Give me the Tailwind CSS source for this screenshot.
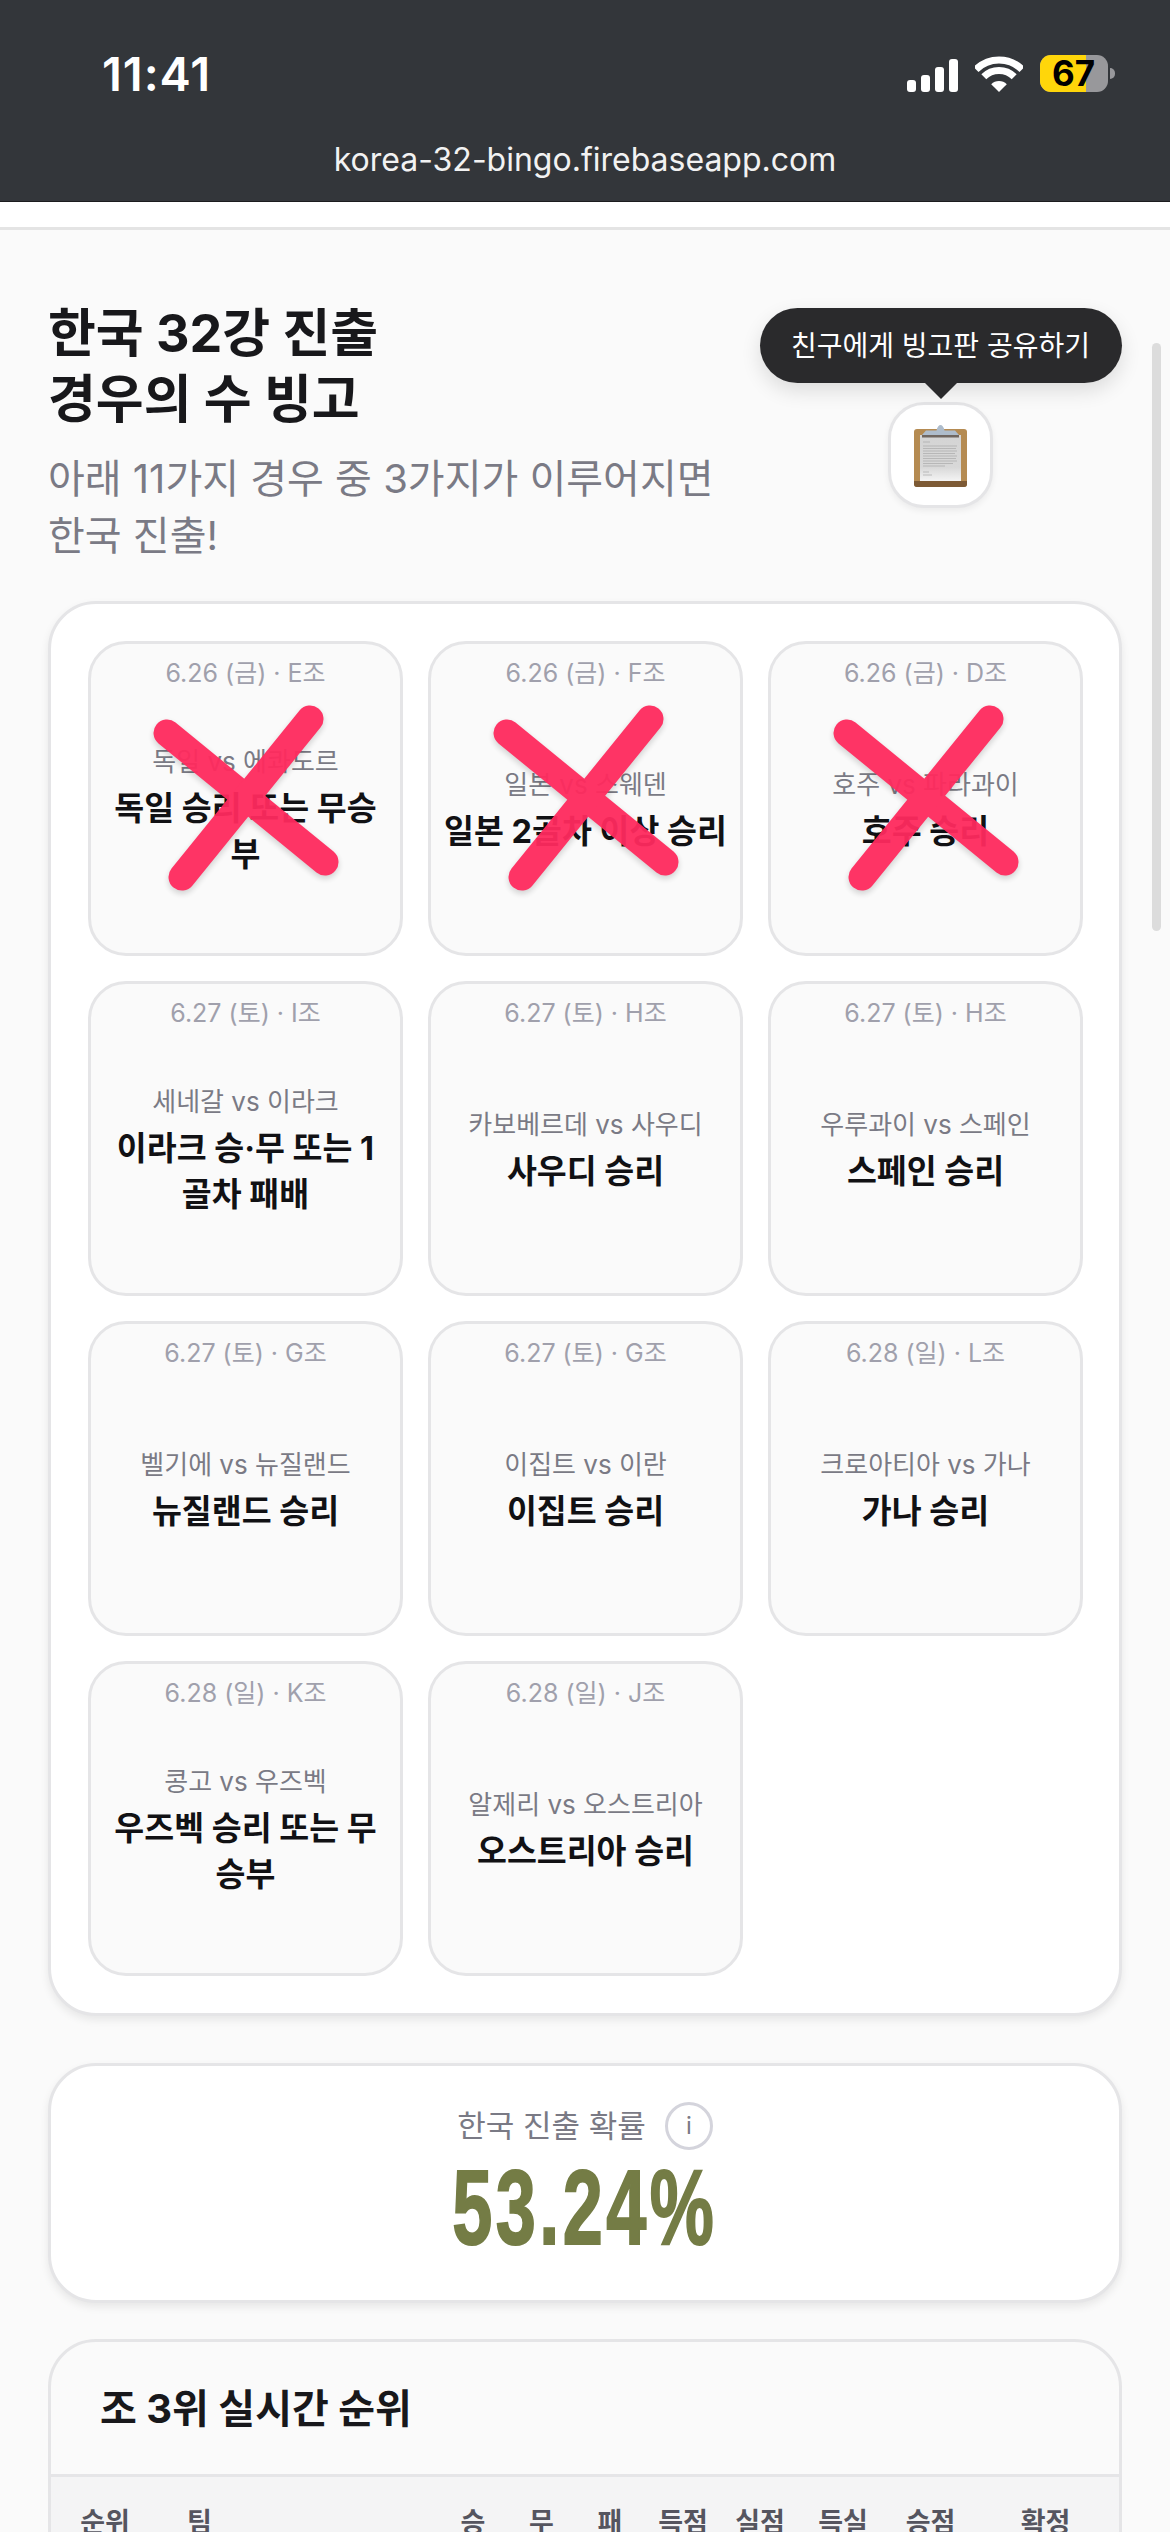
<!DOCTYPE html>
<html lang="ko">
  <head>
    <meta charset="UTF-8" />
    <meta name="viewport" content="width=device-width, initial-scale=1.0" />
    <script src="https://cdn.jsdelivr.net/npm/@tailwindcss/browser@4"></script>
    <title>korea-32-bingo</title>
  </head>
  <body>
    <div class="relative w-[1170px] h-[2532px] overflow-hidden bg-[#fafafa] font-['Inter','Noto_Sans_CJK_KR',sans-serif]">
      <!-- status bar + url -->
      <div class="h-[202px] bg-[#33363a] border-b border-[#1c1c1e] text-white">
        <div class="flex justify-between items-center h-[37px] pl-[102px] pr-[55px] translate-y-[55px]">
          <div class="text-[47px] font-semibold leading-none tracking-[0.02em]">11:41</div>
          <div class="flex items-center">
            <svg width="51" height="33" viewBox="0 0 51 33" class="mt-[3px]" fill="#fff">
              <rect x="0" y="21" width="9" height="12" rx="3" />
              <rect x="14" y="16" width="9" height="17" rx="3" />
              <rect x="28" y="8" width="9" height="25" rx="3" />
              <rect x="42" y="0" width="9" height="33" rx="3" />
            </svg>
            <svg width="48" height="36" viewBox="0 0 48 36" class="ml-[17px]" fill="none" stroke="#fff" stroke-width="7">
              <path d="M1 13.5A32.5 32.5 0 0 1 47 13.5" />
              <path d="M8.8 20.8A21.5 21.5 0 0 1 39.2 20.8" />
              <path d="M24 36L16.2 28.2A11 11 0 0 1 31.8 28.2Z" fill="#fff" stroke="none" />
            </svg>
            <div class="ml-[17px] relative w-[68px] h-[37px] rounded-[11px] overflow-hidden bg-[#98989b]">
              <div class="h-full w-[46px] bg-[#ffd60a]"></div>
              <div class="absolute inset-0 pl-[12px] flex items-center text-black text-[35px] font-bold leading-none">67</div>
            </div>
            <div class="ml-[2px] w-[5px] h-[11px] rounded-r-full bg-[#98989b]"></div>
          </div>
        </div>
        <div class="mt-[103px] text-center text-[32px] leading-[40px] text-[#f2f2f2]">korea-32-bingo.firebaseapp.com</div>
      </div>
      <div class="h-[25px] bg-white"></div>
      <div class="h-[3px] bg-[#e4e4e4]"></div>

      <!-- header -->
      <div class="flex justify-between items-start pl-[48px] pr-[177px] pt-[71px]">
        <div>
          <h1 class="text-[52px] leading-[66px] font-bold text-[#18181b]">한국 32강 진출<br />경우의 수 빙고</h1>
          <p class="mt-[17px] text-[40px] leading-[57px] text-[#7a7a85]">아래 11가지 경우 중 3가지가 이루어지면<br />한국 진출!</p>
        </div>
        <div class="relative mt-[101px]">
          <div class="absolute left-1/2 -translate-x-1/2 -top-[94px] w-[362px] h-[75px] rounded-[38px] bg-[#2a2a2c] text-white text-[28px] flex items-center justify-center whitespace-nowrap shadow-[0_8px_20px_rgba(0,0,0,0.12)]">
            친구에게 빙고판 공유하기
            <div class="absolute left-1/2 -translate-x-1/2 top-[74px] w-0 h-0 border-l-[17px] border-r-[17px] border-t-[17px] border-l-transparent border-r-transparent border-t-[#2a2a2c]"></div>
          </div>
          <div class="w-[105px] h-[106px] rounded-[36px] bg-white border-[3px] border-[#e5e5e7] shadow-[0_3px_6px_rgba(0,0,0,0.06)] flex items-center justify-center">
            <svg width="53" height="63" viewBox="0 0 53 63">
              <defs>
                <linearGradient id="paper" x1="0" y1="0" x2="0" y2="1">
                  <stop offset="0" stop-color="#d4d4d4" />
                  <stop offset="0.7" stop-color="#d8d8d8" />
                  <stop offset="1" stop-color="#f4f4f4" />
                </linearGradient>
              </defs>
              <rect x="0" y="5" width="53" height="58" rx="3" fill="#b58b52" />
              <path d="M0 57H53V60a3 3 0 0 1-3 3H3a3 3 0 0 1-3-3Z" fill="#7d5a35" />
              <rect x="6" y="11" width="41" height="46" fill="url(#paper)" />
              <g stroke="#a9a9a9" stroke-width="0.7">
                <path d="M9 18h7M9 22h34M9 24.5h33M9 27h34M9 29.5h32M9 32h34M9 34.5h33M9 37h34M9 39.5h30M9 42h22M9 48h6M9 51h9" />
              </g>
              <path d="M8 11L12 6.5H22.5C23 3 25 1 26.5 1S30 3 30.5 6.5H41L45 11Z" fill="#aebccb" />
              <rect x="8" y="11" width="37" height="2.5" fill="#6f6660" />
            </svg>
          </div>
        </div>
      </div>

      <!-- bingo board -->
      <div class="mx-[48px] mt-[37px] rounded-[48px] bg-white border-[3px] border-[#e5e5e7] shadow-[0_4px_8px_rgba(0,0,0,0.08)] pt-[37px] pb-[37px] pl-[37px] pr-[36px]">
        <div class="grid grid-cols-3 gap-[25px]">
          <div class="relative h-[315px] flex flex-col rounded-[38px] border-[3px] border-[#e5e5e7] bg-[#fafafa] pt-[11px] pb-[23px] px-[12px] text-center">
            <div class="text-[25px] leading-[36px] text-[#a0a0ac]">6.26 (금) · E조</div>
            <div class="flex-1 flex flex-col justify-center">
              <div class="text-[26px] leading-[36px] text-[#7a7a85]">독일 vs 에콰도르</div>
              <div class="mt-[6px] text-[32.5px] leading-[46px] font-bold text-[#111114]">독일 승리 또는 무승부</div>
            </div>
            <svg class="absolute -left-[3px] -top-[3px] opacity-95 drop-shadow-[0_3px_3px_rgba(0,0,0,0.18)]" width="315" height="315" viewBox="0 0 315 315" fill="none" stroke="#ff2a5e" stroke-width="27" stroke-linecap="round">
              <path d="M79 92L237 221" />
              <path d="M222 78L94 236" />
            </svg>
          </div>
          <div class="relative h-[315px] flex flex-col rounded-[38px] border-[3px] border-[#e5e5e7] bg-[#fafafa] pt-[11px] pb-[23px] px-[12px] text-center">
            <div class="text-[25px] leading-[36px] text-[#a0a0ac]">6.26 (금) · F조</div>
            <div class="flex-1 flex flex-col justify-center">
              <div class="text-[26px] leading-[36px] text-[#7a7a85]">일본 vs 스웨덴</div>
              <div class="mt-[6px] text-[32.5px] leading-[46px] font-bold text-[#111114]">일본 2골차 이상 승리</div>
            </div>
            <svg class="absolute -left-[3px] -top-[3px] opacity-95 drop-shadow-[0_3px_3px_rgba(0,0,0,0.18)]" width="315" height="315" viewBox="0 0 315 315" fill="none" stroke="#ff2a5e" stroke-width="27" stroke-linecap="round">
              <path d="M79 92L237 221" />
              <path d="M222 78L94 236" />
            </svg>
          </div>
          <div class="relative h-[315px] flex flex-col rounded-[38px] border-[3px] border-[#e5e5e7] bg-[#fafafa] pt-[11px] pb-[23px] px-[12px] text-center">
            <div class="text-[25px] leading-[36px] text-[#a0a0ac]">6.26 (금) · D조</div>
            <div class="flex-1 flex flex-col justify-center">
              <div class="text-[26px] leading-[36px] text-[#7a7a85]">호주 vs 파라과이</div>
              <div class="mt-[6px] text-[32.5px] leading-[46px] font-bold text-[#111114]">호주 승리</div>
            </div>
            <svg class="absolute -left-[3px] -top-[3px] opacity-95 drop-shadow-[0_3px_3px_rgba(0,0,0,0.18)]" width="315" height="315" viewBox="0 0 315 315" fill="none" stroke="#ff2a5e" stroke-width="27" stroke-linecap="round">
              <path d="M79 92L237 221" />
              <path d="M222 78L94 236" />
            </svg>
          </div>

          <div class="h-[315px] flex flex-col rounded-[38px] border-[3px] border-[#e5e5e7] bg-[#fafafa] pt-[11px] pb-[23px] px-[12px] text-center">
            <div class="text-[25px] leading-[36px] text-[#a0a0ac]">6.27 (토) · I조</div>
            <div class="flex-1 flex flex-col justify-center">
              <div class="text-[26px] leading-[36px] text-[#7a7a85]">세네갈 vs 이라크</div>
              <div class="mt-[6px] text-[32.5px] leading-[46px] font-bold text-[#111114]">이라크 승·무 또는 1골차 패배</div>
            </div>
          </div>
          <div class="h-[315px] flex flex-col rounded-[38px] border-[3px] border-[#e5e5e7] bg-[#fafafa] pt-[11px] pb-[23px] px-[12px] text-center">
            <div class="text-[25px] leading-[36px] text-[#a0a0ac]">6.27 (토) · H조</div>
            <div class="flex-1 flex flex-col justify-center">
              <div class="text-[26px] leading-[36px] text-[#7a7a85]">카보베르데 vs 사우디</div>
              <div class="mt-[6px] text-[32.5px] leading-[46px] font-bold text-[#111114]">사우디 승리</div>
            </div>
          </div>
          <div class="h-[315px] flex flex-col rounded-[38px] border-[3px] border-[#e5e5e7] bg-[#fafafa] pt-[11px] pb-[23px] px-[12px] text-center">
            <div class="text-[25px] leading-[36px] text-[#a0a0ac]">6.27 (토) · H조</div>
            <div class="flex-1 flex flex-col justify-center">
              <div class="text-[26px] leading-[36px] text-[#7a7a85]">우루과이 vs 스페인</div>
              <div class="mt-[6px] text-[32.5px] leading-[46px] font-bold text-[#111114]">스페인 승리</div>
            </div>
          </div>

          <div class="h-[315px] flex flex-col rounded-[38px] border-[3px] border-[#e5e5e7] bg-[#fafafa] pt-[11px] pb-[23px] px-[12px] text-center">
            <div class="text-[25px] leading-[36px] text-[#a0a0ac]">6.27 (토) · G조</div>
            <div class="flex-1 flex flex-col justify-center">
              <div class="text-[26px] leading-[36px] text-[#7a7a85]">벨기에 vs 뉴질랜드</div>
              <div class="mt-[6px] text-[32.5px] leading-[46px] font-bold text-[#111114]">뉴질랜드 승리</div>
            </div>
          </div>
          <div class="h-[315px] flex flex-col rounded-[38px] border-[3px] border-[#e5e5e7] bg-[#fafafa] pt-[11px] pb-[23px] px-[12px] text-center">
            <div class="text-[25px] leading-[36px] text-[#a0a0ac]">6.27 (토) · G조</div>
            <div class="flex-1 flex flex-col justify-center">
              <div class="text-[26px] leading-[36px] text-[#7a7a85]">이집트 vs 이란</div>
              <div class="mt-[6px] text-[32.5px] leading-[46px] font-bold text-[#111114]">이집트 승리</div>
            </div>
          </div>
          <div class="h-[315px] flex flex-col rounded-[38px] border-[3px] border-[#e5e5e7] bg-[#fafafa] pt-[11px] pb-[23px] px-[12px] text-center">
            <div class="text-[25px] leading-[36px] text-[#a0a0ac]">6.28 (일) · L조</div>
            <div class="flex-1 flex flex-col justify-center">
              <div class="text-[26px] leading-[36px] text-[#7a7a85]">크로아티아 vs 가나</div>
              <div class="mt-[6px] text-[32.5px] leading-[46px] font-bold text-[#111114]">가나 승리</div>
            </div>
          </div>

          <div class="h-[315px] flex flex-col rounded-[38px] border-[3px] border-[#e5e5e7] bg-[#fafafa] pt-[11px] pb-[23px] px-[12px] text-center">
            <div class="text-[25px] leading-[36px] text-[#a0a0ac]">6.28 (일) · K조</div>
            <div class="flex-1 flex flex-col justify-center">
              <div class="text-[26px] leading-[36px] text-[#7a7a85]">콩고 vs 우즈벡</div>
              <div class="mt-[6px] text-[32.5px] leading-[46px] font-bold text-[#111114]">우즈벡 승리 또는 무승부</div>
            </div>
          </div>
          <div class="h-[315px] flex flex-col rounded-[38px] border-[3px] border-[#e5e5e7] bg-[#fafafa] pt-[11px] pb-[23px] px-[12px] text-center">
            <div class="text-[25px] leading-[36px] text-[#a0a0ac]">6.28 (일) · J조</div>
            <div class="flex-1 flex flex-col justify-center">
              <div class="text-[26px] leading-[36px] text-[#7a7a85]">알제리 vs 오스트리아</div>
              <div class="mt-[6px] text-[32.5px] leading-[46px] font-bold text-[#111114]">오스트리아 승리</div>
            </div>
          </div>
        </div>
      </div>

      <!-- probability -->
      <div class="mx-[48px] mt-[47px] h-[240px] rounded-[48px] bg-white border-[3px] border-[#e5e5e7] shadow-[0_4px_8px_rgba(0,0,0,0.08)] pt-[36px] flex flex-col items-center">
        <div class="flex items-center gap-[19px] h-[48px]">
          <span class="text-[31px] text-[#7a7a85]">한국 진출 확률</span>
          <span class="w-[48px] h-[48px] rounded-full border-[3px] border-[#d4d4dc] flex items-center justify-center text-[24px] text-[#7a7a85]">i</span>
        </div>
        <div class="mt-[2px] text-[106px] leading-[110px] font-bold text-[#747c45] tracking-[5px] [font-family:'Liberation_Sans',sans-serif] scale-x-[0.68] [-webkit-text-stroke:2px_#747c45]">53.24%</div>
      </div>

      <!-- standings -->
      <div class="mx-[48px] mt-[36px] rounded-t-[48px] bg-[#fafafa] border-[3px] border-[#e5e5e7] overflow-hidden">
        <div class="h-[135px] flex items-start pl-[49px] pt-[39px] border-b-[3px] border-[#e5e5e7]">
          <h2 class="text-[40px] leading-[56px] font-bold text-[#18181b]">조 3위 실시간 순위</h2>
        </div>
        <table class="w-full table-fixed bg-[#f4f4f5] text-[27px] font-semibold text-[#55555f]">
          <thead>
            <tr class="h-[90px] align-top">
              <th class="w-[108px] pt-[26px] font-semibold">순위</th>
              <th class="w-[281px] pt-[26px] pl-[28px] text-left font-semibold">팀</th>
              <th class="w-[66px] pt-[26px] font-semibold">승</th>
              <th class="w-[71px] pt-[26px] font-semibold">무</th>
              <th class="w-[66px] pt-[26px] font-semibold">패</th>
              <th class="w-[80px] pt-[26px] font-semibold">득점</th>
              <th class="w-[74px] pt-[26px] font-semibold">실점</th>
              <th class="w-[92px] pt-[26px] font-semibold">득실</th>
              <th class="w-[83px] pt-[26px] font-semibold">승점</th>
              <th class="pt-[26px] font-semibold">확정</th>
            </tr>
          </thead>
        </table>
      </div>

      <!-- scrollbar -->
      <div class="absolute left-[1152px] top-[343px] w-[9px] h-[588px] rounded-full bg-[#dcdcdc]"></div>
    </div>
  </body>
</html>
